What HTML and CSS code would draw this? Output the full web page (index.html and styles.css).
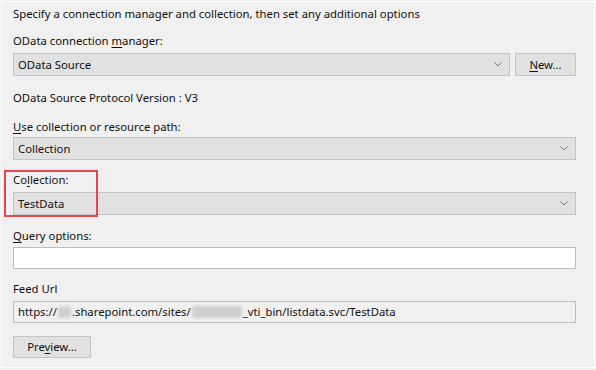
FILE: index.html
```html
<!doctype html>
<html lang="en">
  <head>
    <meta charset="utf-8">
    <title>OData Source</title>
    <link rel="stylesheet" href="styles.css">
  </head>
  <body>
    <div class="dialog">
      <p class="intro">Specify a connection manager and collection, then set any additional options</p>

      <!-- connection manager -->
      <div class="group group-conn">
        <label class="label">OData connection <u>m</u>anager:</label>
        <div class="combo-row">
          <div class="combo combo-short">
            <span>OData Source</span>
            <svg class="chevron" viewBox="0 0 8 5"><polyline points="0.5 0.5 4 4 7.5 0.5" fill="none" stroke="currentColor" stroke-width="1"/></svg>
          </div>
          <button class="btn btn-new"><u>N</u>ew...</button>
        </div>
      </div>

      <p class="version">OData Source Protocol Version : V3</p>

      <div class="group group-path">
        <label class="label"><u>U</u>se collection or resource path:</label>
        <div class="combo">
          <span>Collection</span>
          <svg class="chevron" viewBox="0 0 8 5"><polyline points="0.5 0.5 4 4 7.5 0.5" fill="none" stroke="currentColor" stroke-width="1"/></svg>
        </div>
      </div>

      <div class="group group-coll">
        <div class="highlight"></div>
        <label class="label">Co<u>l</u>lection:</label>
        <div class="combo">
          <span>TestData</span>
          <svg class="chevron" viewBox="0 0 8 5"><polyline points="0.5 0.5 4 4 7.5 0.5" fill="none" stroke="currentColor" stroke-width="1"/></svg>
        </div>
      </div>

      <div class="group group-query">
        <label class="label"><u>Q</u>uery options:</label>
        <div class="textbox"></div>
      </div>

      <div class="group group-feed">
        <label class="label">Feed Url</label>
        <div class="textbox textbox-readonly">https://<span class="blur blur-a"></span>.sharepoint.com/sites/<span class="blur blur-b"></span>_vti_bin/listdata.svc/TestData</div>
      </div>

      <button class="btn btn-preview">Pre<u>v</u>iew...</button>
    </div>
  </body>
</html>
```

FILE: styles.css
```css
* {
  margin: 0;
  padding: 0;
  box-sizing: border-box;
}

body {
  background: #f0f0f0;
  font-family: 'Noto Sans', 'Open Sans', sans-serif;
  font-size: 11.3px;
  line-height: 16px;
  color: #111;
  width: 596px;
  height: 370px;
  overflow: hidden;
}

.dialog {
  margin: 1px;
  height: 367px;
  width: 594px;
  border: 1px solid #fcfcfc;
  padding: 4px 0 0 11px;
}

.intro {
  margin-bottom: 11px;
}

.group {
  position: relative;
  display: flex;
  flex-direction: column;
  gap: 4px;
  width: 563px;
}

.label u,
.btn u {
  text-decoration-thickness: 1px;
  text-underline-offset: 2px;
}

.combo-row {
  display: flex;
  gap: 5px;
}

.combo {
  height: 23px;
  background: #e1e1e1;
  border: 1px solid #c4c4c4;
  display: flex;
  align-items: center;
  justify-content: space-between;
  padding: 0 7px 0 4px;
}

.combo-short {
  width: 497px;
}

.chevron {
  width: 8px;
  height: 5px;
  color: #7a7a7a;
}

.btn {
  height: 23px;
  background: #e1e1e1;
  border: 1px solid #c4c4c4;
  font: inherit;
  color: inherit;
}

.btn-new {
  width: 61px;
}

.version {
  margin-top: 14px;
}

.group-path {
  margin-top: 13px;
  gap: 2px;
}

.group-coll {
  margin-top: 12px;
}

.highlight {
  position: absolute;
  left: -9px;
  top: -2px;
  width: 94px;
  height: 47px;
  border: 2px solid #e8464b;
}

.group-query {
  margin-top: 13px;
  gap: 3px;
}

.textbox {
  height: 22px;
  background: #ffffff;
  border: 1px solid #bdbdbd;
  padding: 0 4px;
  display: flex;
  align-items: center;
  white-space: nowrap;
}

.textbox-readonly {
  background: #f0f0f0;
}

.group-feed {
  margin-top: 12px;
}

.blur {
  display: inline-block;
  height: 12px;
  background: #cfcfcf;
  border-radius: 3px;
  filter: blur(1.5px);
}

.blur-a {
  width: 13px;
  margin: 0 1px;
}

.blur-b {
  width: 50px;
  margin: 0 1px;
}

.btn-preview {
  margin-top: 13px;
  width: 78px;
  height: 22px;
}
```
